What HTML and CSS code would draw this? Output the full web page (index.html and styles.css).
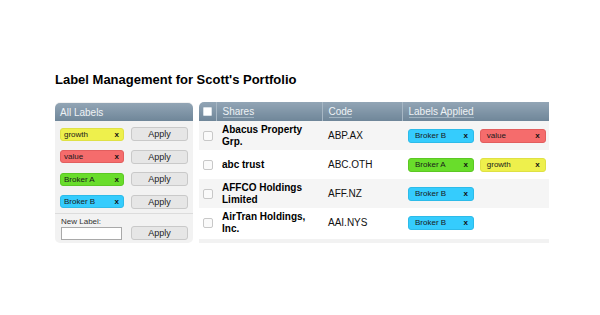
FILE: index.html
```html
<!DOCTYPE html>
<html lang="en">
<head>
    <meta charset="UTF-8">
    <meta name="viewport" content="width=device-width, initial-scale=1.0">
    <title>Label Management</title>
    <link rel="stylesheet" href="styles.css">
</head>
<body>

    <div class="page">

        <h1 class="page_title">Label Management for Scott's Portfolio</h1>

        <div class="columns">

            <!-- 왼쪽: 라벨 목록 -->
            <section class="labels_panel">
                <h2 class="panel_head">All Labels</h2>
                <ul class="label_list">
                    <li class="label_row">
                        <span class="tag growth">growth<b>x</b></span>
                        <button class="btn">Apply</button>
                    </li>
                    <li class="label_row">
                        <span class="tag value">value<b>x</b></span>
                        <button class="btn">Apply</button>
                    </li>
                    <li class="label_row">
                        <span class="tag brokerA">Broker A<b>x</b></span>
                        <button class="btn">Apply</button>
                    </li>
                    <li class="label_row">
                        <span class="tag brokerB">Broker B<b>x</b></span>
                        <button class="btn">Apply</button>
                    </li>
                </ul>
                <div class="new_label">
                    <div class="new_field">
                        <label for="newLabel">New Label:</label>
                        <input id="newLabel" type="text">
                    </div>
                    <button class="btn">Apply</button>
                </div>
            </section>

            <!-- 오른쪽: 종목 테이블 -->
            <section class="shares_panel">
                <table class="shares">
                    <thead>
                        <tr>
                            <th class="col_check"><span class="box head_box"></span></th>
                            <th class="col_name"><a href="#">Shares</a></th>
                            <th class="col_code"><a href="#">Code</a></th>
                            <th class="col_labels"><a href="#">Labels Applied</a></th>
                        </tr>
                    </thead>
                    <tbody>
                        <tr>
                            <td class="col_check"><span class="box"></span></td>
                            <td class="col_name">Abacus Property Grp.</td>
                            <td class="col_code">ABP.AX</td>
                            <td class="col_labels">
                                <span class="tag wide brokerB">Broker B<b>x</b></span>
                                <span class="tag wide value">value<b>x</b></span>
                            </td>
                        </tr>
                        <tr>
                            <td class="col_check"><span class="box"></span></td>
                            <td class="col_name">abc trust</td>
                            <td class="col_code">ABC.OTH</td>
                            <td class="col_labels">
                                <span class="tag wide brokerA">Broker A<b>x</b></span>
                                <span class="tag wide growth">growth<b>x</b></span>
                            </td>
                        </tr>
                        <tr>
                            <td class="col_check"><span class="box"></span></td>
                            <td class="col_name">AFFCO Holdings Limited</td>
                            <td class="col_code">AFF.NZ</td>
                            <td class="col_labels">
                                <span class="tag wide brokerB">Broker B<b>x</b></span>
                            </td>
                        </tr>
                        <tr>
                            <td class="col_check"><span class="box"></span></td>
                            <td class="col_name">AirTran Holdings, Inc.</td>
                            <td class="col_code">AAI.NYS</td>
                            <td class="col_labels">
                                <span class="tag wide brokerB">Broker B<b>x</b></span>
                            </td>
                        </tr>
                    </tbody>
                </table>
                <div class="shares_foot"></div>
            </section>

        </div>

    </div>

</body>
</html>
```

FILE: styles.css
```css
* {
    padding: 0;
    margin: 0;
    box-sizing: border-box;
    font-family: 'Liberation Sans', Arial, sans-serif;
    color: #111;
}
ul, ol {
    list-style-type: none;
}
a {
    text-decoration: none;
}
body {
    background: #fff;
}
.page {
    padding: 71px 0 0 55px;
}
.page_title {
    height: 31px;
    font-size: 13px;
    line-height: 18px;
    font-weight: bold;
    color: #000;
}
.columns {
    display: flex;
    align-items: flex-start;
    gap: 6px;
}

/* 왼쪽 패널 */
.labels_panel {
    width: 138px;
    background: #f2f2f2;
    border-radius: 5px;
    padding-bottom: 3px;
}
.panel_head {
    height: 18px;
    padding-left: 5px;
    border-radius: 5px 5px 0 0;
    background: linear-gradient(#92a5b5, #6f8699);
    font-size: 10px;
    font-weight: normal;
    line-height: 19px;
    color: #eef2f5;
    margin-top: 1px;
}
.label_list {
    padding: 6px 5px 0 5px;
    border-bottom: 1px solid #dcdcdc;
}
.label_row {
    display: flex;
    justify-content: space-between;
    align-items: center;
    height: 14px;
    margin-bottom: 8.5px;
}
.label_row:last-child {
    margin-bottom: 4px;
}
.tag {
    display: inline-flex;
    justify-content: space-between;
    align-items: center;
    width: 64px;
    height: 13px;
    padding: 0 4px 0 3px;
    border-radius: 3px;
    font-size: 8px;
    color: #1a1a1a;
}
.tag b {
    font-size: 8px;
    font-weight: bold;
    color: #111;
}
.tag.wide {
    width: 66px;
    height: 14px;
    margin-right: 3px;
    padding: 0 5px 0 6px;
}
.growth {
    background: #eef04c;
    border: 1px solid #dfe145;
}
.value {
    background: #f56c6c;
    border: 1px solid #e25e5e;
}
.brokerA {
    background: #69dd2b;
    border: 1px solid #5cc824;
}
.brokerB {
    background: #35ccfd;
    border: 1px solid #2dbbe9;
}
.btn {
    width: 57px;
    height: 14px;
    border: 1px solid #c9c9c9;
    border-radius: 3px;
    background: #e6e6e6;
    font-size: 9px;
    color: #222;
}
.new_label {
    display: flex;
    justify-content: space-between;
    align-items: flex-end;
    padding: 3px 5px 0 6px;
}
.new_field label {
    display: block;
    font-size: 8px;
    line-height: 9px;
    color: #333;
    margin-bottom: 1px;
}
.new_field input {
    display: block;
    width: 61px;
    height: 13px;
    border: 1px solid #a9a9a9;
    background: #fff;
    outline: 0;
}

/* 오른쪽 테이블 */
.shares_panel {
    width: 350px;
}
.shares {
    width: 100%;
    table-layout: fixed;
    border-collapse: collapse;
}
.shares th {
    height: 19px;
    padding: 0 6px;
    background: linear-gradient(#92a5b5, #6f8699);
    border-left: 1px solid #a7b7c4;
    text-align: left;
    font-size: 10px;
    font-weight: normal;
}
.shares th:first-child {
    border-left: 0;
    border-radius: 5px 0 0 0;
}
.shares th a {
    color: #eef2f5;
    border-bottom: 1px solid #9fb1bf;
}
.shares td {
    height: 29px;
    padding: 0 6px;
    font-size: 10px;
    line-height: 12px;
    vertical-align: middle;
}
.shares tbody tr:nth-child(odd) td {
    background: #f5f5f5;
}
.col_check {
    width: 17px;
}
.shares .col_check {
    padding: 0 0 0 4px;
}
.col_name {
    width: 106px;
}
.shares td.col_name {
    font-weight: bold;
    color: #000;
}
.col_code {
    width: 80px;
}
.box {
    display: block;
    width: 10px;
    height: 10px;
    border: 1px solid #c8c8c8;
    border-radius: 2px;
    background: #fafafa;
}
.head_box {
    width: 9px;
    height: 9px;
    border: 1px solid #d8e0e6;
    border-radius: 1px;
    background: #fff;
}
.shares td.col_labels {
    padding-left: 6px;
    white-space: nowrap;
}
.shares_foot {
    height: 4px;
    margin-top: 2px;
    background: #f2f2f2;
}
```
